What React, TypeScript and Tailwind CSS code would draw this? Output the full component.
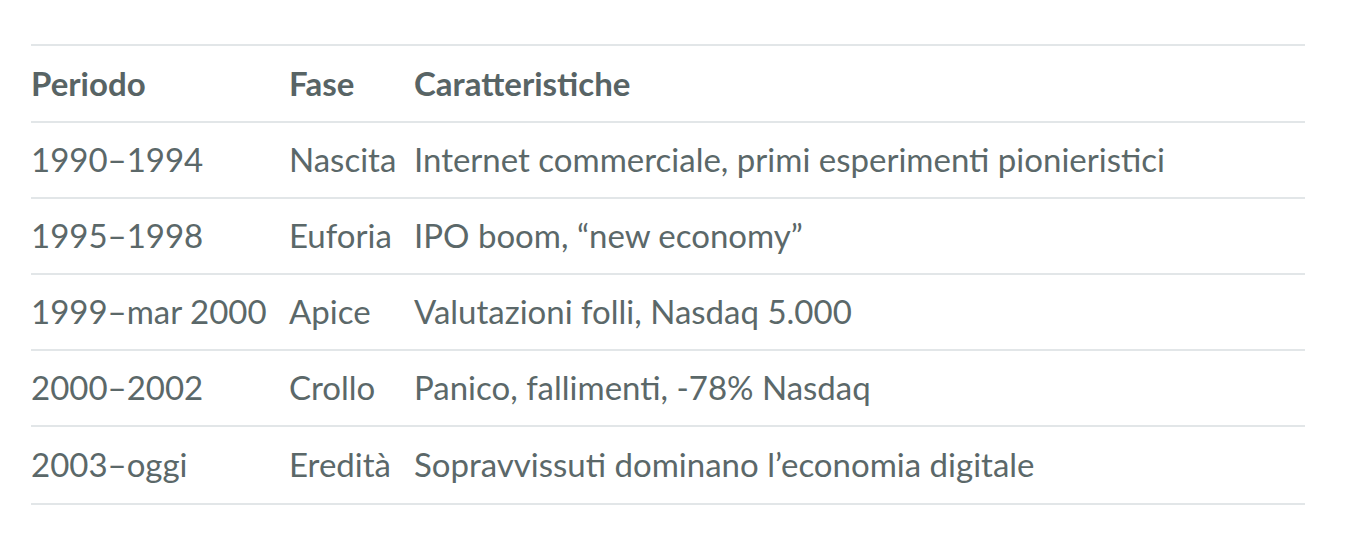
const rows = [
  { period: "1990–1994", phase: "Nascita", notes: "Internet commerciale, primi esperimenti pionieristici" },
  { period: "1995–1998", phase: "Euforia", notes: "IPO boom, “new economy”" },
  { period: "1999–mar 2000", phase: "Apice", notes: "Valutazioni folli, Nasdaq 5.000" },
  { period: "2000–2002", phase: "Crollo", notes: "Panico, fallimenti, -78% Nasdaq" },
  { period: "2003–oggi", phase: "Eredità", notes: "Sopravvissuti dominano l’economia digitale" },
];

export default function App() {
  return (
    <div className="min-h-screen bg-white pt-[44px] pl-[31px] pr-[41px] font-['Lato','Liberation_Sans',sans-serif] text-[#5b6869]">
      <table className="w-full table-fixed border-collapse border-t-2 border-[#e2e6e8]">
        <colgroup>
          <col className="w-[258px]" />
          <col className="w-[125px]" />
          <col />
        </colgroup>
        <thead>
          <tr className="h-[77px] border-b-2 border-[#e2e6e8] text-left text-[33px] font-bold text-[#586465]">
            <th className="p-0 font-bold">Periodo</th>
            <th className="p-0 font-bold">Fase</th>
            <th className="p-0 font-bold">Caratteristiche</th>
          </tr>
        </thead>
        <tbody>
          {rows.map((row) => (
            <tr key={row.period} className="h-[76px] last:h-[78px] border-b-2 border-[#e2e6e8] text-[33px]">
              <td className="p-0 whitespace-nowrap">{row.period}</td>
              <td className="p-0 whitespace-nowrap">{row.phase}</td>
              <td className="p-0 whitespace-nowrap">{row.notes}</td>
            </tr>
          ))}
        </tbody>
      </table>
    </div>
  );
}
